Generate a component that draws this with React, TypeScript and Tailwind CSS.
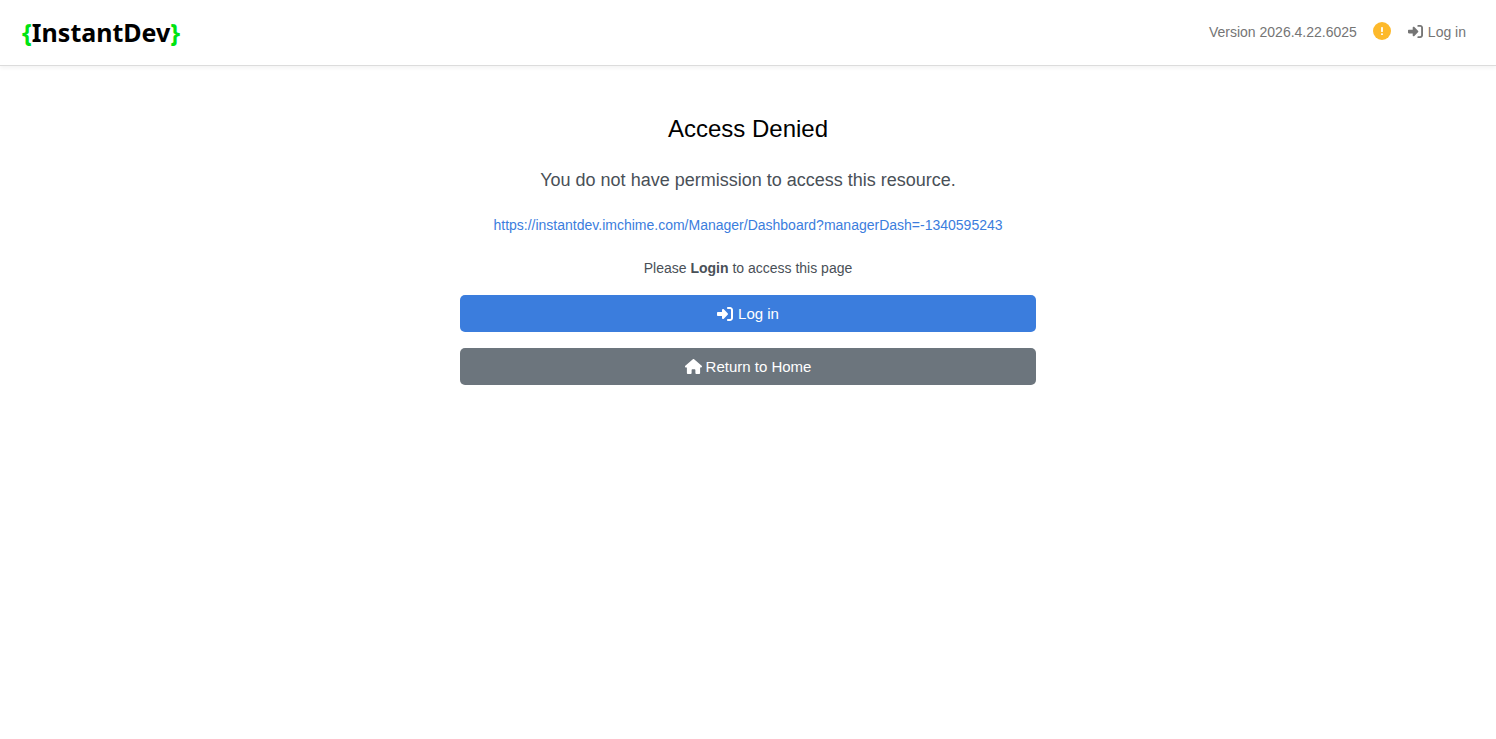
import React from "react";
import { FaHouse, FaRightToBracket } from "react-icons/fa6";

const Logo = () => {
   return (
      <a
         href="/"
         className="flex items-center font-['Noto_Sans',sans-serif] text-[25px] leading-8 font-bold text-black"
      >
         <span className="text-[#00e312]">{"{"}</span>
         InstantDev
         <span className="text-[#00e312]">{"}"}</span>
      </a>
   );
};

const Alert = () => {
   return (
      <svg viewBox="0 0 18 18" className="block h-[18px] w-[18px]">
         <circle cx="9" cy="9" r="9" fill="#fdb92b" />
         <rect x="8.1" y="5" width="1.8" height="5" rx="0.4" fill="#fff" />
         <rect x="8.1" y="11.3" width="1.8" height="1.8" rx="0.4" fill="#fff" />
      </svg>
   );
};

const Header = () => {
   return (
      <header className="flex h-[66px] items-center justify-between border-b border-[#dcdcdc] pr-[30px] pb-[2px] pl-[22px] shadow-[0_2px_4px_rgba(0,0,0,0.05)]">
         <Logo />
         <nav className="flex items-center text-sm text-[#757575]">
            <span>Version 2026.4.22.6025</span>
            <button type="button" aria-label="Alerts" className="mr-[17px] mb-[2px] ml-4">
               <Alert />
            </button>
            <a href="/login" className="flex items-center gap-[5px]">
               <FaRightToBracket className="h-[15px] w-[15px]" />
               Log in
            </a>
         </nav>
      </header>
   );
};

const App = () => {
   return (
      <div className="min-h-screen bg-white font-['Liberation_Sans',Arial,sans-serif] text-sm text-[#495057]">
         <Header />
         <main className="mx-auto flex max-w-xl flex-col pt-12 text-center">
            <h1 className="text-2xl leading-[30px] text-black">Access Denied</h1>
            <p className="mt-6 text-lg leading-6">
               You do not have permission to access this resource.
            </p>
            <a
               href="https://instantdev.imchime.com/Manager/Dashboard?managerDash=-1340595243"
               className="mt-[23px] self-center leading-5 text-[#3b7ddd]"
            >
               https://instantdev.imchime.com/Manager/Dashboard?managerDash=-1340595243
            </a>
            <p className="mt-[23px] leading-5">
               Please <strong>Login</strong> to access this page
            </p>
            <a
               href="/login"
               className="mt-[17px] flex h-[37px] items-center justify-center gap-[5px] rounded-[5px] bg-[#3b7ddd] text-[15px] text-white"
            >
               <FaRightToBracket className="h-4 w-4" />
               Log in
            </a>
            <a
               href="/"
               className="mt-4 flex h-[37px] items-center justify-center gap-1 rounded-[5px] bg-[#6c757d] text-[15px] text-white"
            >
               <FaHouse className="h-[17px] w-[17px]" />
               Return to Home
            </a>
         </main>
      </div>
   );
};

export default App;
